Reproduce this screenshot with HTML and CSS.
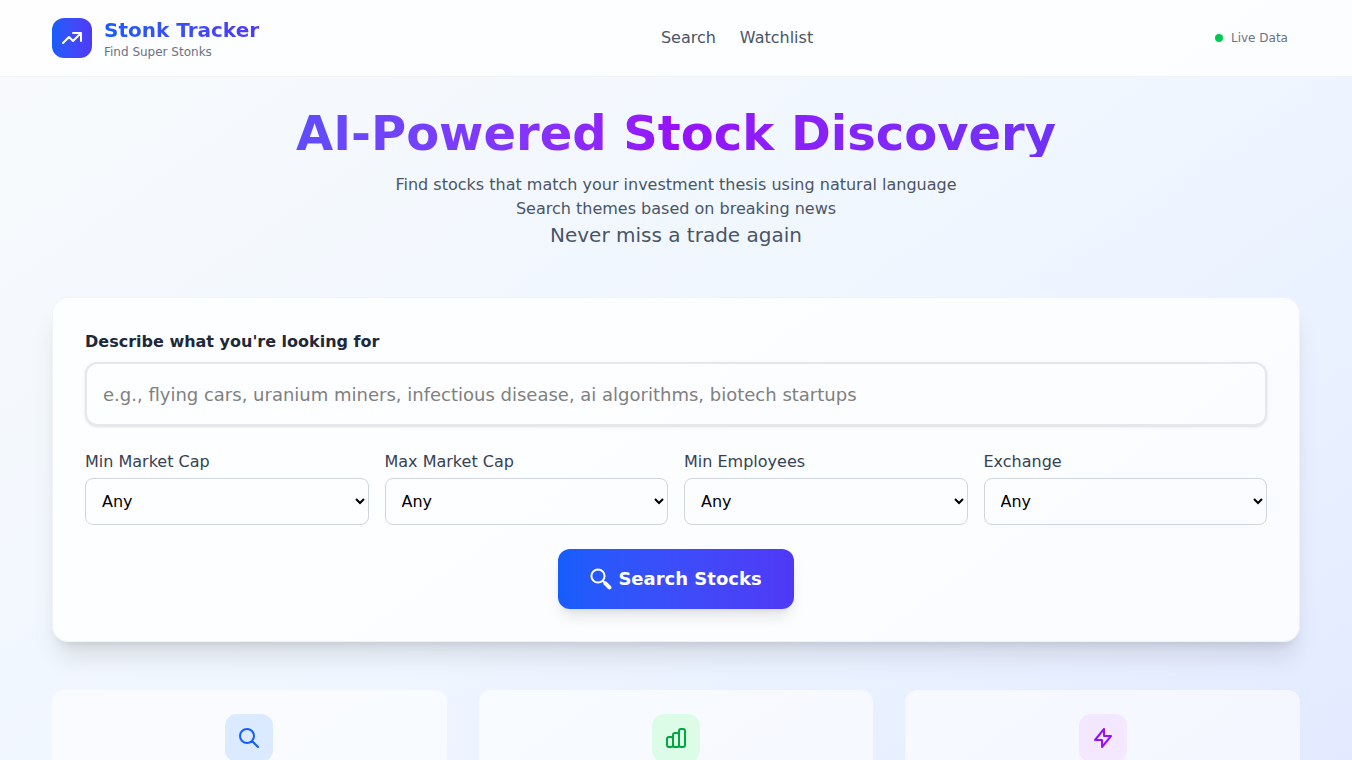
FILE: index.html
```html
<!DOCTYPE html>
<html lang="en">
<head>
    <meta charset="UTF-8">
    <meta name="viewport" content="width=device-width, initial-scale=1.0">
    <title>Stonk Tracker</title>
    <link rel="stylesheet" href="styles.css">
</head>
<body>
    <header class="site-header">
        <div class="container header-inner">
            <div class="brand">
                <div class="brand-logo">
                    <svg class="icon" viewBox="0 0 24 24"><path d="M13 7h8m0 0v8m0-8l-8 8-4-4-6 6"/></svg>
                </div>
                <div>
                    <div class="brand-name">Stonk Tracker</div>
                    <div class="brand-tagline">Find Super Stonks</div>
                </div>
            </div>
            <nav class="nav">
                <a href="#search">Search</a>
                <a href="#watchlist">Watchlist</a>
            </nav>
            <div class="status"><span class="status-dot"></span>Live Data</div>
        </div>
    </header>

    <main class="container main">
        <section class="hero">
            <h1>AI-Powered Stock Discovery</h1>
            <p>Find stocks that match your investment thesis using natural language</p>
            <p>Search themes based on breaking news</p>
            <p class="hero-lead">Never miss a trade again</p>
        </section>

        <form class="search-card" id="search">
            <div>
                <label class="query-label" for="query">Describe what you're looking for</label>
                <input class="query-input" type="text" id="query" placeholder="e.g., flying cars, uranium miners, infectious disease, ai algorithms, biotech startups">
            </div>

            <div class="filters">
                <div>
                    <label class="filter-label" for="minCap">Min Market Cap</label>
                    <select class="filter-select" id="minCap"><option>Any</option></select>
                </div>
                <div>
                    <label class="filter-label" for="maxCap">Max Market Cap</label>
                    <select class="filter-select" id="maxCap"><option>Any</option></select>
                </div>
                <div>
                    <label class="filter-label" for="minEmployees">Min Employees</label>
                    <select class="filter-select" id="minEmployees"><option>Any</option></select>
                </div>
                <div>
                    <label class="filter-label" for="exchange">Exchange</label>
                    <select class="filter-select" id="exchange"><option>Any</option></select>
                </div>
            </div>

            <button class="search-button" type="submit">
                <svg class="search-glyph" viewBox="0 0 22 22"><circle cx="8" cy="8" r="6.6"/><path d="M12.7 12.7l2.3 2.3"/><path class="handle" d="M15.4 15.4l4 4"/></svg>
                Search Stocks
            </button>
        </form>

        <section class="features">
            <div class="feature">
                <div class="feature-icon blue">
                    <svg class="icon" viewBox="0 0 24 24"><path d="M21 21l-6-6m2-5a7 7 0 11-14 0 7 7 0 0114 0z"/></svg>
                </div>
            </div>
            <div class="feature">
                <div class="feature-icon green">
                    <svg class="icon" viewBox="0 0 24 24"><path d="M9 19v-6a2 2 0 00-2-2H5a2 2 0 00-2 2v6a2 2 0 002 2h2a2 2 0 002-2zm0 0V9a2 2 0 012-2h2a2 2 0 012 2v10m-6 0a2 2 0 002 2h2a2 2 0 002-2m0 0V5a2 2 0 012-2h2a2 2 0 012 2v14a2 2 0 01-2 2h-2a2 2 0 01-2-2z"/></svg>
                </div>
            </div>
            <div class="feature">
                <div class="feature-icon purple">
                    <svg class="icon" viewBox="0 0 24 24"><path d="M13 10V3L4 14h7v7l9-11h-7z"/></svg>
                </div>
            </div>
        </section>
    </main>
</body>
</html>
```

FILE: styles.css
```css
* {
    box-sizing: border-box;
    margin: 0;
    padding: 0;
}

body {
    min-height: 100vh;
    font-family: "DejaVu Sans", sans-serif;
    font-size: 16px;
    line-height: 24px;
    color: #4a5565;
    background: linear-gradient(to bottom right in oklab, #f8fafc, #eff6ff, #e0e7ff);
}

.container {
    width: 100%;
    max-width: 1280px;
    margin: 0 auto;
    padding: 0 16px;
}

.icon {
    display: block;
    width: 24px;
    height: 24px;
    fill: none;
    stroke: currentColor;
    stroke-width: 2;
    stroke-linecap: round;
    stroke-linejoin: round;
}

/* header */
.site-header {
    background: rgba(255, 255, 255, 0.8);
    border-bottom: 1px solid rgba(229, 231, 235, 0.5);
}

.header-inner {
    display: flex;
    justify-content: space-between;
    align-items: center;
    padding: 16px;
}

.brand {
    display: flex;
    align-items: center;
    gap: 12px;
}

.brand-logo {
    display: flex;
    align-items: center;
    justify-content: center;
    width: 40px;
    height: 40px;
    border-radius: 12px;
    color: white;
    background: linear-gradient(to right in oklab, #155dfc, #4f39f6);
}

.brand-name {
    font-size: 20px;
    line-height: 28px;
    font-weight: bold;
    color: transparent;
    background: linear-gradient(to right in oklab, #155dfc, #4f39f6);
    background-clip: text;
    -webkit-background-clip: text;
}

.brand-tagline {
    font-size: 12px;
    line-height: 16px;
    color: #6a7282;
}

.nav {
    display: flex;
    gap: 24px;
}

.nav a {
    color: #4a5565;
    text-decoration: none;
}

.nav a:hover {
    color: #155dfc;
}

.status {
    display: flex;
    align-items: center;
    gap: 8px;
    margin-right: 12px;
    font-size: 12px;
    line-height: 16px;
    color: #6a7282;
}

.status-dot {
    width: 8px;
    height: 8px;
    border-radius: 50%;
    background: #00c950;
}

/* hero */
.main {
    padding-top: 32px;
    padding-bottom: 32px;
}

.hero {
    margin-bottom: 48px;
    text-align: center;
}

.hero h1 {
    margin-bottom: 16px;
    font-size: 48px;
    line-height: 48px;
    font-weight: bold;
    color: transparent;
    background: linear-gradient(to right in oklab, #155dfc, #9810fa, #4f39f6);
    background-clip: text;
    -webkit-background-clip: text;
}

.hero-lead {
    font-size: 20px;
    line-height: 28px;
}

/* search form */
.search-card {
    display: flex;
    flex-direction: column;
    gap: 24px;
    margin-bottom: 48px;
    padding: 32px;
    background: rgba(255, 255, 255, 0.8);
    border: 1px solid rgba(229, 231, 235, 0.5);
    border-radius: 16px;
    box-shadow: 0 20px 25px -5px rgba(0, 0, 0, 0.1), 0 8px 10px -6px rgba(0, 0, 0, 0.1);
}

.query-label {
    display: block;
    margin-bottom: 8px;
    font-weight: bold;
    color: #1e2939;
}

.query-input {
    display: block;
    width: 100%;
    height: 64px;
    padding: 16px;
    font-family: inherit;
    font-size: 18px;
    background: transparent;
    border: 2px solid #e5e7eb;
    border-radius: 12px;
    box-shadow: 0 1px 3px rgba(0, 0, 0, 0.1), 0 1px 2px -1px rgba(0, 0, 0, 0.1);
}

.query-input::placeholder {
    color: #808080;
}

.filters {
    display: grid;
    grid-template-columns: repeat(4, 1fr);
    gap: 16px;
}

.filter-label {
    display: block;
    margin-bottom: 4px;
    color: #364153;
}

.filter-select {
    display: block;
    width: 100%;
    height: 47px;
    padding: 12px;
    font-family: inherit;
    font-size: 16px;
    color: black;
    background: transparent;
    border: 1px solid #d1d5dc;
    border-radius: 8px;
}

.search-button {
    display: flex;
    align-items: center;
    align-self: center;
    gap: 6px;
    padding: 16px 32px;
    font-family: inherit;
    font-size: 18px;
    line-height: 28px;
    font-weight: bold;
    color: white;
    background: linear-gradient(to right in oklab, #155dfc, #4f39f6);
    border: none;
    border-radius: 12px;
    box-shadow: 0 10px 15px -3px rgba(0, 0, 0, 0.1), 0 4px 6px -4px rgba(0, 0, 0, 0.1);
    cursor: pointer;
}

.search-glyph {
    width: 22px;
    height: 22px;
    fill: none;
    stroke: currentColor;
    stroke-width: 2;
    stroke-linecap: round;
}

.search-glyph .handle {
    stroke-width: 4;
}

/* features */
.features {
    display: grid;
    grid-template-columns: repeat(3, 1fr);
    gap: 32px;
}

.feature {
    min-height: 228px;
    padding: 24px;
    background: rgba(255, 255, 255, 0.6);
    border-radius: 12px;
}

.feature-icon {
    display: flex;
    align-items: center;
    justify-content: center;
    width: 48px;
    height: 48px;
    margin: 0 auto;
    border-radius: 12px;
}

.feature-icon.blue {
    color: #155dfc;
    background: #dbeafe;
}

.feature-icon.green {
    color: #00a63e;
    background: #dcfce7;
}

.feature-icon.purple {
    color: #9810fa;
    background: #f3e8ff;
}

@media (max-width: 768px) {
    .filters,
    .features {
        grid-template-columns: 1fr;
    }
}
```
